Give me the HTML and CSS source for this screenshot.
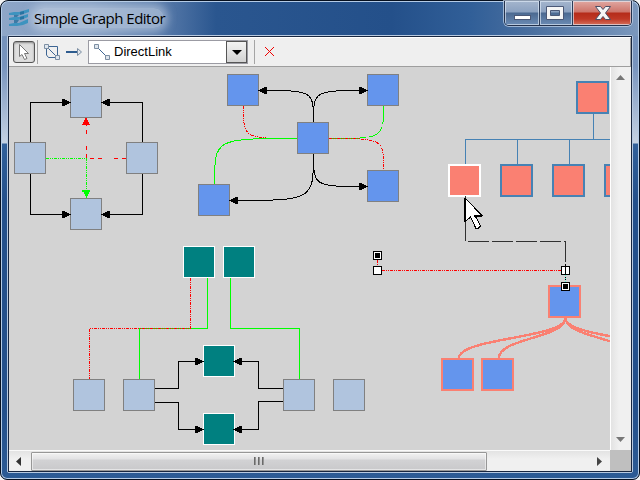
FILE: index.html
```html
<!DOCTYPE html>
<html lang="en">
<head>
<meta charset="utf-8">
<title>Simple Graph Editor</title>
<link rel="stylesheet" href="styles.css">
</head>
<body>
<div class="window">
  <header class="titlebar">
    <svg class="logo" width="20" height="18" viewBox="0 0 20 18">
      <path fill="#3d93bf" d="M0 4l5-1 5 0 10-3v3l-6 2-6 1-8 0zM0 9l5-1 5 0 9-3v3l-5 2-6 1-8 0zM0 15l5-1 5 0 9-4v4l-5 2-6 1-8 0z"/>
      <path fill="#1c6695" d="M5 6h5l-2 2h-3zM11 3l4-1v3l-4 1zM5 11h5l-2 3h-3zM11 8l4-1v3l-4 1z" opacity=".7"/>
    </svg>
    <span class="title">Simple Graph Editor</span>
    <div class="controls">
      <span class="ctl min"><svg width="34" height="22"><rect x="9.500" y="14.500" width="16" height="4" fill="#fff" stroke="#4b5876"/></svg></span>
      <span class="ctl max"><svg width="32" height="22"><path d="M6.500 5.500h17v13h-17zM10.500 9.500v5h9v-5z" fill="#f5f5f5" stroke="#4b5876" fill-rule="evenodd"/></svg></span>
      <span class="ctl close"><svg width="58" height="22"><path d="M22.500 5.500h5l2.500 3 2.500-3h5l-5 6.500 5 6.500h-5l-2.500-3-2.500 3h-5l5-6.500z" fill="#f5f5f5" stroke="#4b4f66"/></svg></span>
    </div>
  </header>
  <main class="client">
    <div class="toolbar">
      <span class="tool pressed"><svg width="20" height="20"><path d="M5.500 2.500v12l2.500-2 2.500 5 2.500-1-2.500-5h4z" fill="#fff" stroke="#777"/></svg></span>
      <i class="sep"></i>
      <svg class="ico-poly" width="16" height="16"><path d="M3 2.500h10.500v10M2.500 3v8l2 2.500h8M3 3l10 10" fill="none" stroke="#3d6593"/><path d="M.5.5h4v4h-4zM11.500 11.500h4v4h-4z" fill="#dfe6ee" stroke="#7d8fa3"/></svg>
      <svg class="ico-arrow" width="17" height="10"><path d="M0 5h12" stroke="#2e5c8f" stroke-width="2"/><path d="M11.500 1.500v7l4-3.500z" fill="#dfe6ee" stroke="#7d8fa3"/></svg>
      <div class="combo">
        <svg width="16" height="16"><path d="M3 3l10 10" stroke="#3d6593"/><path d="M.5.5h4v4h-4zM11.500 11.500h4v4h-4z" fill="#dfe6ee" stroke="#7d8fa3"/></svg>
        <span class="value">DirectLink</span>
        <span class="drop"><svg width="10" height="5"><path d="M0 0h10L5 5z"/></svg></span>
      </div>
      <i class="sep sep2"></i>
      <svg class="ico-x" width="9" height="9" shape-rendering="crispEdges"><path d="M0 0l9 9M9 0L0 9" stroke="#f00000"/></svg>
    </div>
    <div class="view">
      <svg class="graph" width="601" height="383" viewBox="9 67 601 383">
        <defs>
          <path id="head" d="M-8-3.500h3v1h2v1h2v1h2v1h-2v1h-2v1h-2v1h-3z"/>
          <rect id="n" x=".5" y=".5" width="31" height="31"/>
          <rect id="t" x="1" y="1" width="31" height="31"/>
        </defs>

        <g class="link">
          <path d="M30.500 142V102.500H70M142.500 142V102.500H102M30.500 174V214.500H70M142.500 174V214.500H102"/>
          <path class="red dash" d="M126 158.500H87"/>
          <path class="red dash" d="M86.500 158V118"/>
          <path class="green dots" d="M46 158.500H86.500V190"/>
        </g>
        <g class="pale"><use href="#n" x="70" y="86"/><use href="#n" x="14" y="142"/><use href="#n" x="126" y="142"/><use href="#n" x="70" y="198"/></g>
        <g class="heads">
          <use href="#head" transform="translate(70 102.500)"/><use href="#head" transform="translate(102 102.500) scale(-1 1)"/>
          <use href="#head" transform="translate(70 214.500)"/><use href="#head" transform="translate(102 214.500) scale(-1 1)"/>
          <path class="redfill" d="M86 118h1v2h1v2h1v2h1v1h-8v-1h1v-2h1v-2h1v-2z"/>
          <path class="greenfill" d="M82 190h8v2h-1v2h-1v2h-1v2h-1v-2h-1v-2h-1v-2h-2z"/>
        </g>

        <g class="link">
          <path d="M313.500 122C313.500 90.500 313.500 90.500 259 90.500M313.500 122C313.500 90.500 313.500 90.500 367 90.500M313.500 154C313.500 186.500 313.500 186.500 367 186.500M313.500 154C313.500 200.500 313.500 200.500 230 200.500"/>
          <path class="red dots" d="M243.500 106C243.500 138.500 243.500 138.500 297 138.500"/>
          <path class="green" d="M297 138.500C214.500 138.500 214.500 138.500 214.500 184"/>
          <path class="green long" d="M383.500 106C383.500 138.500 383.500 138.500 329 138.500"/>
          <path class="red dots" d="M329 138.500C383.500 138.500 383.500 138.500 383.500 170"/>
        </g>
        <g class="blue"><use href="#n" x="227" y="74"/><use href="#n" x="367" y="74"/><use href="#n" x="297" y="122"/><use href="#n" x="367" y="170"/><use href="#n" x="198" y="184"/></g>
        <g class="heads">
          <use href="#head" transform="translate(259 90.500) scale(-1 1)"/><use href="#head" transform="translate(367 90.500)"/>
          <use href="#head" transform="translate(367 186.500)"/><use href="#head" transform="translate(230 200.500) scale(-1 1)"/>
        </g>

        <path class="link steel" d="M593.500 114V139.500M465.500 164V139.500H621.500V164M517.500 139.500V164M569.500 139.500V164"/>
        <g class="salmon"><use href="#t" x="576" y="81"/><use href="#t" x="500" y="164"/><use href="#t" x="552" y="164"/><use href="#t" x="604" y="164"/><use class="picked" href="#t" x="448" y="164"/></g>

        <g class="link">
          <path class="green" d="M207.500 278V328.500H139.500V379M230.500 278V328.500H299.500V379"/>
          <path class="red dots" d="M190.500 278V328.500H89.500V379"/>
          <path d="M154 388.500H178.500V361.500H204M154 402.500H178.500V429.500H204M283 388.500H258.500V361.500H235M283 401.500H258.500V429.500H235"/>
        </g>
        <g class="pale"><use href="#n" x="73" y="379"/><use href="#n" x="123" y="379"/><use href="#n" x="283" y="379"/><use href="#n" x="333" y="379"/></g>
        <g class="teal"><use href="#n" x="183" y="246"/><use href="#n" x="223" y="246"/><use href="#n" x="203" y="345"/><use href="#n" x="203" y="413"/></g>
        <g class="heads">
          <use href="#head" transform="translate(203 361.500)"/><use href="#head" transform="translate(234 361.500) scale(-1 1)"/>
          <use href="#head" transform="translate(203 429.500)"/><use href="#head" transform="translate(234 429.500) scale(-1 1)"/>
        </g>

        <path class="link branch" d="M565.500 318C565.500 338 459 338 459 358M565.500 318C565.500 338 499 338 499 358M565.500 318C565.500 338 633 338 633 358M565.500 318C565.500 338 673 338 673 358"/>
        <g class="blue edged"><use href="#t" x="548" y="285"/><use href="#t" x="441" y="358"/><use href="#t" x="481" y="358"/></g>

        <path class="link ink" d="M465.500 196V241M468 241.500h21m3 0h21m3 0h21m3 0h21m3 0h1.500v20"/>
        <path class="link red dots" d="M377.500 260V266M382 270.500H561"/>
        <path class="link" stroke-dasharray="1 1" d="M565.500 275V282"/>
        <path class="link cyan" stroke-dasharray="1 2" d="M565.500 275V282"/>
        <g class="grip">
          <rect x="373.500" y="251.500" width="8" height="8"/><rect x="373.500" y="266.500" width="8" height="8"/>
          <rect x="561.500" y="266.500" width="8" height="8"/><rect x="561.500" y="282.500" width="8" height="8"/>
          <path class="solid" d="M375 253h5v5h-5zM563 284h5v5h-5zM565 264h1v11h-1z"/>
        </g>
        <path class="pointer" d="M465 198L482 215.500H475L480.500 226L478 228.500H476L470.500 217L465 222z"/>
        <path class="link" stroke-width="2" d="M465 198V222M474 216H482"/>
      </svg>
      <div class="vbar">
        <svg width="9" height="5"><path fill="#777" d="M0 5L4.500 0 9 5z"/></svg>
        <svg width="9" height="5"><path fill="#777" d="M0 0L4.500 5 9 0z"/></svg>
      </div>
      <div class="hbar">
        <span class="end"><svg width="5" height="9"><path fill="#333" d="M5 0L0 4.500 5 9z"/></svg></span>
        <span class="thumb"><i></i><i></i><i></i></span>
        <span class="end last"><svg width="5" height="9"><path fill="#444" d="M0 0L5 4.500 0 9z"/></svg></span>
      </div>
      <div class="corner"></div>
    </div>
  </main>
</div>
</body>
</html>
```
FILE: styles.css
```css
* { box-sizing: border-box; }
body { margin: 0; width: 640px; height: 480px; overflow: hidden; background: #f4f4f4; }
svg { display: block; flex: none; }

.window {
  width: 640px;
  height: 480px;
  padding: 0 6px 6px;
  border: 1px solid #06101f;
  border-radius: 8px 8px 7px 7px;
  box-shadow: inset 0 0 0 1px #b4cbe6;
  background: linear-gradient(90deg, #8ea6c7 0, #819cc1 90px, #5578a8 165px, #2a568f 215px, #24508a 390px, #315f98 470px, #4a6f9f 530px, #7291b8 620px, #7c98bd) 0 0 / 100% 35px no-repeat,
    linear-gradient(180deg, #7190ba 0, #7894bd 65px, #c5d2e3 142px, #31609a 143px, #24508b 200px, #24508b 410px, #2c5b95) no-repeat;
}

.titlebar { display: flex; height: 34px; padding-left: 2px; align-items: flex-start; }
.logo { margin-top: 8px; position: relative; z-index: 1; }
.title {
  width: 130px;
  margin: 7px 0 0 5px;
  border-radius: 10px;
  background: rgba(202, 215, 232, .55);
  box-shadow: 0 0 9px 4px rgba(202, 215, 232, .55);
  font: 15px/20px "Open Sans", "Noto Sans", sans-serif;
  letter-spacing: -.5px;
  white-space: nowrap;
  color: #000;
}
.controls {
  display: flex;
  height: 25px;
  margin: 0 1px 0 auto;
  border: 1px solid #24324d;
  border-top: 0;
  border-radius: 0 0 5px 5px;
  box-shadow: 0 0 0 1px rgba(200, 215, 235, .7);
  overflow: hidden;
}
.ctl { border-right: 1px solid #2c3c58; box-shadow: inset 0 0 0 1px rgba(225, 235, 248, .65); background: linear-gradient(#a4b5cd 0, #8ba1c0 11px, #4b6991 12px, #6b8bb4); }
.close { border-right: 0; background: linear-gradient(#e0a7a1 0, #cd756b 11px, #b52b1a 12px, #bf3826 18px, #d5705c); }

.client { display: flex; flex-direction: column; flex: none; height: 438px; margin: 0; border: 1px solid #b8cae1; border-radius: 2px; }
.toolbar { display: flex; flex: none; align-items: center; height: 31px; border: 1px solid #18263f; border-bottom: 0; padding: 0 0 0 4px; background: #efefef; box-shadow: inset 0 1px #fff, inset -1px -1px #9e9e9e; }
.tool { width: 22px; height: 22px; }
.pressed { border: 1px solid #555; border-radius: 3px; background: #dedede; box-shadow: inset 0 1px 2px #888; }
.sep { width: 1px; height: 24px; margin-left: 2px; background: #a5a5a5; }
.ico-poly { margin-left: 6px; }
.ico-arrow { margin-left: 6px; }
.combo { display: flex; align-items: center; width: 160px; height: 24px; margin-left: 5px; padding-left: 5px; border: 1px solid #9b9ba3; background: #fff; }
.value { margin-left: 4px; font: 13px/18px "Liberation Sans", Arial, sans-serif; color: #000; }
.drop { display: flex; align-items: center; justify-content: center; width: 21px; height: 22px; margin-left: auto; border: 1px solid #555; background: linear-gradient(#f3f3f3, #d2d2d2); }
.sep2 { margin-left: 6px; }
.ico-x { margin-left: 10px; margin-top: -2px; }

.view { display: grid; grid-template-columns: 601px 21px; grid-template-rows: 383px 21px; border: solid #18263f; border-width: 0 1px 1px; }
.graph { background: #d3d3d3; shape-rendering: crispEdges; }
.link { fill: none; stroke: #000; }
.red, .link .red { stroke: #f00; }
.green { stroke: #0f0; }
.cyan { stroke: #5fd; }
.steel { stroke: #4682b4; }
.ink { stroke: #303030; }
.branch { stroke: #fa8072; stroke-width: 2.4; }
.dash { stroke-dasharray: 4 4 4 12; }
.dots { stroke-dasharray: 3 1 1 1 1 1; }
.long { stroke-dasharray: 18 3; }
.redfill { fill: #f00; }
.greenfill { fill: #0f0; }
.pale { fill: #b0c4de; stroke: #808080; }
.blue { fill: #6495ed; stroke: #808080; }
.teal { fill: #008080; stroke: #fff; }
.salmon { fill: #fa8072; stroke: #4682b4; stroke-width: 2; }
.picked { stroke: #fff; }
.edged { stroke: #fa8072; stroke-width: 2; }
.grip { fill: #fff; stroke: #000; }
.solid { fill: #000; stroke: none; }
.pointer { fill: #fff; stroke: #000; }

.vbar { display: flex; flex-direction: column; justify-content: space-between; align-items: center; padding: 8px 1px 8px 0; border-left: 1px solid #fff; background: linear-gradient(90deg, #e3e3e3, #f0f0f0 8px); }
.hbar { display: flex; align-items: center; border-top: 1px solid #fafafa; background: linear-gradient(#e3e3e3, #f0f0f0 8px); }
.end { display: flex; width: 22px; justify-content: center; padding-right: 4px; }
.last { margin-left: auto; padding: 0; }
.thumb { display: flex; gap: 2px; align-items: center; justify-content: center; width: 456px; height: 19px; border: 1px solid #979797; border-radius: 1px; background: linear-gradient(#f2f2f2 0, #e2e2e4 6px, #d2d2d4 7px, #c9c9cb); box-shadow: inset 0 0 0 1px rgba(255, 255, 255, .5); }
.thumb i { width: 2px; height: 8px; background: linear-gradient(90deg, #555, #aaa); }
.corner { background: #bfbfbf; }
```
